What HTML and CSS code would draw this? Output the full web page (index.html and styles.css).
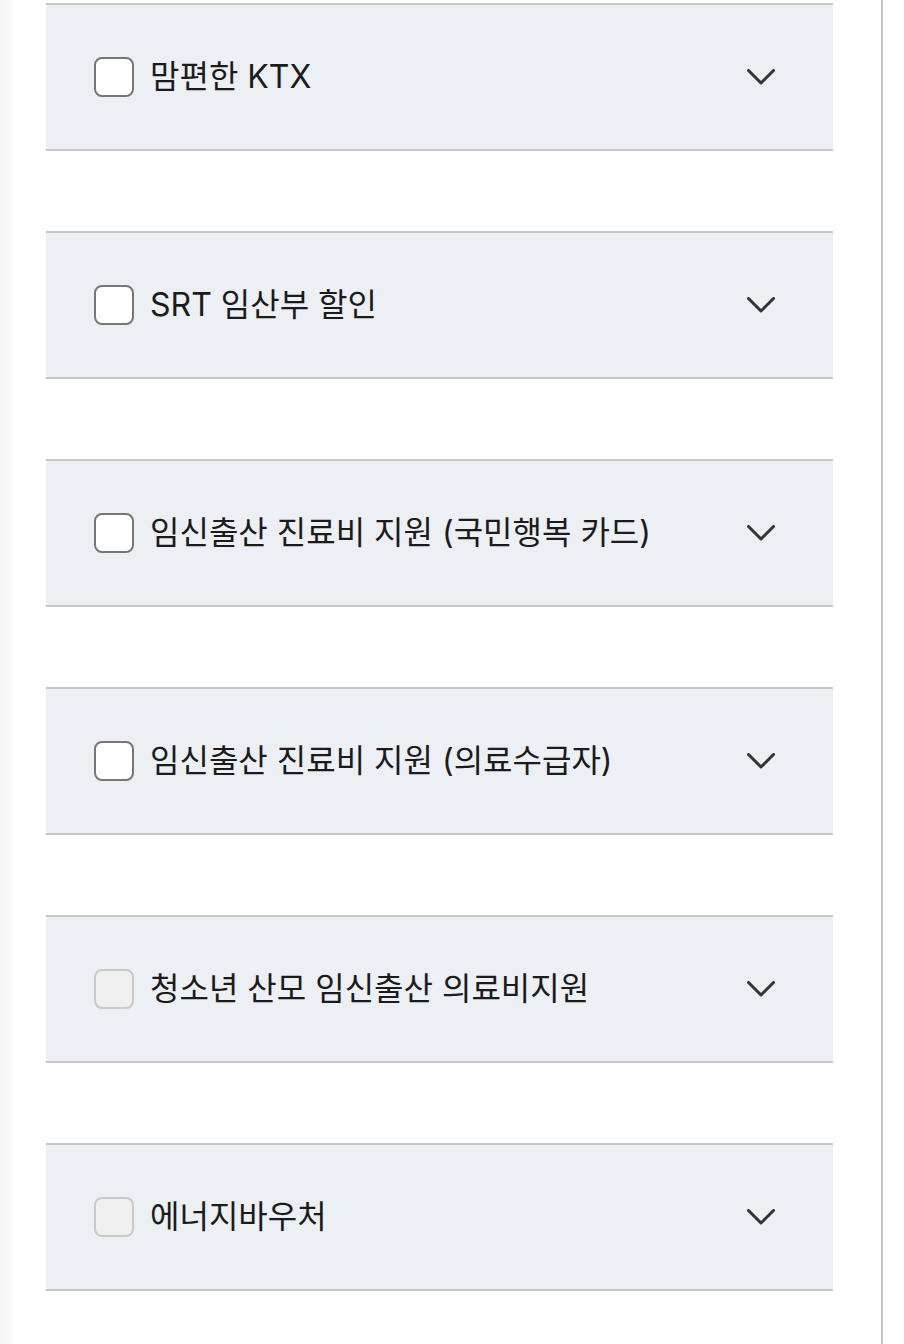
FILE: index.html
```html
<!DOCTYPE html>
<html lang="ko">
<head>
<meta charset="utf-8">
<link rel="stylesheet" href="styles.css">
</head>
<body>
<div class="page">
  <div class="column">
    <ul class="list">
      <li class="item">
        <span class="box"></span>
        <span class="label">맘편한 KTX</span>
        <svg class="chev" viewBox="0 0 28 16" width="28" height="16"><polyline points="1.5,1.5 14,14 26.5,1.5"/></svg>
      </li>
      <li class="item">
        <span class="box"></span>
        <span class="label">SRT 임산부 할인</span>
        <svg class="chev" viewBox="0 0 28 16" width="28" height="16"><polyline points="1.5,1.5 14,14 26.5,1.5"/></svg>
      </li>
      <li class="item">
        <span class="box"></span>
        <span class="label">임신출산 진료비 지원 (국민행복 카드)</span>
        <svg class="chev" viewBox="0 0 28 16" width="28" height="16"><polyline points="1.5,1.5 14,14 26.5,1.5"/></svg>
      </li>
      <li class="item">
        <span class="box"></span>
        <span class="label">임신출산 진료비 지원 (의료수급자)</span>
        <svg class="chev" viewBox="0 0 28 16" width="28" height="16"><polyline points="1.5,1.5 14,14 26.5,1.5"/></svg>
      </li>
      <li class="item">
        <span class="box disabled"></span>
        <span class="label">청소년 산모 임신출산 의료비지원</span>
        <svg class="chev" viewBox="0 0 28 16" width="28" height="16"><polyline points="1.5,1.5 14,14 26.5,1.5"/></svg>
      </li>
      <li class="item">
        <span class="box disabled"></span>
        <span class="label">에너지바우처</span>
        <svg class="chev" viewBox="0 0 28 16" width="28" height="16"><polyline points="1.5,1.5 14,14 26.5,1.5"/></svg>
      </li>
    </ul>
  </div>
</div>
</body>
</html>
```

FILE: styles.css
```css
html, body {
  margin: 0;
  padding: 0;
  height: 100%;
}
body {
  background: linear-gradient(to right, #f6f6f6 0, #fafafa 12px, #ffffff 14px);
  font-family: Inter, "Noto Sans CJK KR", sans-serif;
  color: #1b1b1b;
  overflow: hidden;
}
.page {
  display: flex;
  height: 100%;
}
.column {
  width: 881px;
  border-right: 2px solid #c6c6c6;
  min-height: 1344px;
}
.list {
  list-style: none;
  margin: 0;
  padding: 3px 0 0 46px;
  display: flex;
  flex-direction: column;
  gap: 80px;
}
.item {
  width: 787px;
  height: 148px;
  box-sizing: border-box;
  background: #eceff4;
  border-top: 2px solid #c6c6c6;
  border-bottom: 2px solid #c6c6c6;
  display: flex;
  align-items: center;
  padding: 0 58px 0 48px;
}
.box {
  width: 40px;
  height: 40px;
  box-sizing: border-box;
  border: 2px solid #767676;
  border-radius: 8px;
  background: #ffffff;
  flex: none;
}
.box.disabled {
  border-color: #c9c9c9;
  background: #efefef;
}
.label {
  margin-left: 16px;
  font-size: 32px;
  line-height: 40px;
  flex: 1;
}
.chev {
  flex: none;
  fill: none;
  stroke: #333333;
  stroke-width: 3;
  stroke-linecap: round;
  stroke-linejoin: round;
}
```
